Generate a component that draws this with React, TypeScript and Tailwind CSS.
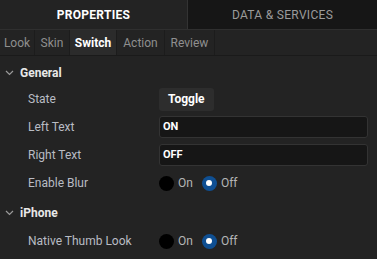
import { useState } from 'react'

const tabs = ['Look', 'Skin', 'Switch', 'Action', 'Review']

function Chevron() {
  return (
    <svg width="9" height="6" viewBox="0 0 9 6" className="mr-[6px]">
      <path d="M1 1l3.5 3.5L8 1" fill="none" stroke="#9a9a9a" strokeWidth="1.2" />
    </svg>
  )
}

function Radio({ label, checked }: { label: string; checked: boolean }) {
  return (
    <div className="flex items-center mr-[9px]">
      {checked ? (
        <div className="w-[15px] h-[15px] rounded-full bg-[#0f4f92] flex items-center justify-center">
          <div className="w-[6px] h-[6px] rounded-full bg-white"></div>
        </div>
      ) : (
        <div className="w-[15px] h-[15px] rounded-full bg-black"></div>
      )}
      <span className="ml-[4px] text-[12px] text-[#b5b5b5]">{label}</span>
    </div>
  )
}

function Row({ label, children }: { label: string; children: React.ReactNode }) {
  return (
    <div className="flex items-center h-[28px]">
      <div className="w-[159px] pl-[28px] text-[12px] text-[#b9bcc4]">{label}</div>
      <div className="flex-1 flex items-center pr-[9px]">{children}</div>
    </div>
  )
}

export default function App() {
  const [tab, setTab] = useState(2)

  return (
    <div className="w-[377px] h-[259px] bg-[#232323] overflow-hidden" style={{ fontFamily: 'Roboto, "Noto Sans", sans-serif' }}>
      {/* Header */}
      <div className="flex h-[30px] border-b border-[#2f2f2f]">
        <div className="w-[187px] flex items-center justify-center pt-[1px] bg-[#232323] text-white font-bold text-[12px] tracking-[0.3px]">
          PROPERTIES
        </div>
        <div className="flex-1 flex items-center justify-center pt-[1px] bg-[#161616] border-l border-[#333] text-[#9b9b9b] text-[12px] tracking-[0.3px]">
          DATA &amp; SERVICES
        </div>
      </div>

      {/* Sub tabs */}
      <div className="flex h-[26px] border-b border-[#1a1a1a]">
        {tabs.map((t, i) => (
          <div
            key={t}
            onClick={() => setTab(i)}
            className={`flex items-center justify-center border-r border-[#1c1c1c] text-[12px] ${
              i === tab ? 'bg-[#2b2b2b] text-white font-bold' : 'text-[#8f8f8f]'
            } ${['w-[35px]', 'w-[35px]', 'w-[47px]', 'w-[48px]', 'w-[50px]'][i]}`}
          >
            {t}
          </div>
        ))}
      </div>

      {/* General */}
      <div className="flex items-center h-[29px] pl-[5px] pt-[5px]">
        <Chevron />
        <span className="text-[12px] font-bold text-[#e8e8e8]">General</span>
      </div>
      <Row label="State">
        <button className="h-[23px] px-[9px] bg-[#2d2d2d] rounded-[3px] text-white text-[12px] font-bold">Toggle</button>
      </Row>
      <Row label="Left Text">
        <div className="w-full h-[22px] bg-[#161616] border border-[#333] rounded-[3px] flex items-center pl-[3px] text-white text-[11px] font-bold">ON</div>
      </Row>
      <Row label="Right Text">
        <div className="w-full h-[22px] bg-[#161616] border border-[#333] rounded-[3px] flex items-center pl-[3px] text-white text-[11px] font-bold">OFF</div>
      </Row>
      <Row label="Enable Blur">
        <Radio label="On" checked={false} />
        <Radio label="Off" checked={true} />
      </Row>

      {/* iPhone */}
      <div className="flex items-center h-[30px] pl-[5px] pt-[2px]">
        <Chevron />
        <span className="text-[12px] font-bold text-[#e8e8e8]">iPhone</span>
      </div>
      <Row label="Native Thumb Look">
        <Radio label="On" checked={false} />
        <Radio label="Off" checked={true} />
      </Row>
    </div>
  )
}
